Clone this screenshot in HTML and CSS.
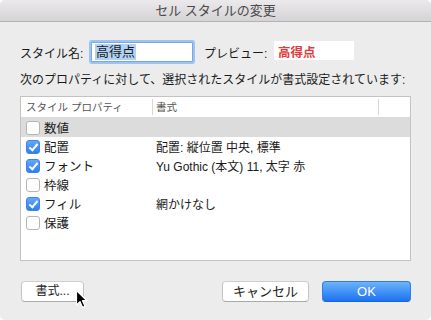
FILE: index.html
```html
<!DOCTYPE html>
<html lang="ja">
<head>
    <meta charset="UTF-8">
    <title>セル スタイルの変更</title>
    <link rel="stylesheet" href="styles.css">
</head>
<body>

    <div class="window">
        <div class="titlebar">セル スタイルの変更</div>

        <div class="content">
            <!-- style name + preview -->
            <div class="name-row">
                <label class="name-label" for="style-name">スタイル名:</label>
                <div class="name-input"><span class="selected">高得点</span></div>
                <span class="preview-label">プレビュー:</span>
                <div class="preview-box">高得点</div>
            </div>

            <p class="desc">次のプロパティに対して、選択されたスタイルが書式設定されています:</p>

            <!-- property list -->
            <div class="props">
                <div class="props-head">
                    <div class="col-name">スタイル プロパティ</div>
                    <div class="col-format">書式</div>
                    <div class="col-rest"></div>
                </div>
                <div class="prop-row highlight">
                    <div class="col-name"><span class="check"></span>数値</div>
                    <div class="col-format"></div>
                </div>
                <div class="prop-row">
                    <div class="col-name"><span class="check on"></span>配置</div>
                    <div class="col-format">配置: 縦位置 中央, 標準</div>
                </div>
                <div class="prop-row">
                    <div class="col-name"><span class="check on"></span>フォント</div>
                    <div class="col-format">Yu Gothic (本文) 11, 太字 赤</div>
                </div>
                <div class="prop-row">
                    <div class="col-name"><span class="check"></span>枠線</div>
                    <div class="col-format"></div>
                </div>
                <div class="prop-row">
                    <div class="col-name"><span class="check on"></span>フィル</div>
                    <div class="col-format">網かけなし</div>
                </div>
                <div class="prop-row">
                    <div class="col-name"><span class="check"></span>保護</div>
                    <div class="col-format"></div>
                </div>
            </div>

            <div class="buttons">
                <button class="btn btn-format">書式...</button>
                <div class="spacer"></div>
                <button class="btn btn-cancel">キャンセル</button>
                <button class="btn btn-ok">OK</button>
            </div>
        </div>

        <!-- mouse pointer over the 書式 button -->
        <svg class="pointer" width="14" height="20" viewBox="0 0 14 20">
            <path d="M1.5 1.5 L1.5 16 L5 12.6 L7.6 18.4 L10 17.3 L7.5 11.7 L12 11.7 Z" fill="#000" stroke="#fff" stroke-width="1.2" stroke-linejoin="round"/>
        </svg>
    </div>

</body>
</html>
```

FILE: styles.css
```css
body {
    margin: 0;
    background: #ffffff;
    font-family: "Liberation Sans", "Noto Sans CJK JP", sans-serif;
    color: #1a1a1a;
}
.window {
    position: relative;
    width: 431px;
    height: 320px;
    background: #ececec;
    border-radius: 5px;
    overflow: hidden;
}
.titlebar {
    height: 21px;
    line-height: 21px;
    text-align: center;
    font-size: 13px;
    color: #4a4a4a;
    background: linear-gradient(#ebe9eb, #d5d3d5);
    border-bottom: 1px solid #b3b3b3;
}
.content {
    padding: 20px 20px 0 20px;
}
.name-row {
    display: flex;
    align-items: center;
    height: 20px;
    font-size: 12px;
}
.name-label {
    width: 71px;
}
.name-input {
    width: 97px;
    height: 18px;
    background: #fff;
    border: 1px solid #78a9e4;
    box-shadow: 0 0 0 2px #9dc4f0;
    border-radius: 1px;
    display: flex;
    align-items: center;
    padding-left: 3px;
    font-size: 13px;
}
.selected {
    background: #b2d2f4;
    line-height: 16px;
    padding: 0 1px;
}
.preview-label {
    margin-left: 11px;
    width: 70px;
}
.preview-box {
    width: 76px;
    height: 19px;
    padding-left: 4px;
    margin-top: -3px;
    background: #fff;
    color: #e23b3b;
    font-weight: bold;
    font-size: 12.5px;
    line-height: 24px;
}
.desc {
    margin: 10px 0 0 0;
    font-size: 12px;
    line-height: 17px;
}
.props {
    margin-top: 7px;
    height: 163px;
    background: #fff;
    border: 1px solid #c3c3c3;
}
.props-head {
    display: flex;
    height: 20px;
    border-bottom: 1px solid #dadada;
    font-size: 10.5px;
    color: #555;
    align-items: center;
}
.props-head .col-format {
    border-left: 1px solid #d8d8d8;
    height: 16px;
    line-height: 16px;
}
.props-head .col-rest {
    flex: 1;
    border-left: 1px solid #d8d8d8;
    height: 16px;
}
.props-head .col-name {
    line-height: 16px;
}
.col-name {
    width: 126px;
    padding-left: 5px;
    display: flex;
    align-items: center;
}
.col-format {
    width: 222px;
    padding-left: 3px;
}
.prop-row {
    display: flex;
    align-items: center;
    height: 19px;
    font-size: 12.5px;
}
.prop-row .col-format {
    padding-left: 4px;
    font-size: 12px;
}
.prop-row.highlight {
    background: #dcdcdc;
}
.check {
    width: 12px;
    height: 12px;
    margin-right: 4px;
    border: 1px solid #b5b5b5;
    border-radius: 3px;
    background: #fff;
    position: relative;
}
.check.on {
    border-color: #3a86ee;
    background: linear-gradient(#64a8f8, #2f7fee);
}
.check.on::after {
    content: "";
    position: absolute;
    left: 4px;
    top: 1px;
    width: 3px;
    height: 7px;
    border: solid #fff;
    border-width: 0 2px 2px 0;
    transform: rotate(40deg);
}
.buttons {
    display: flex;
    align-items: center;
    margin-top: 20px;
}
.spacer {
    flex: 1;
}
.btn {
    height: 21px;
    font-family: inherit;
    font-size: 13px;
    border-radius: 4px;
    border: 1px solid #c4c4c4;
    border-top-color: #cfcfcf;
    border-bottom-color: #a9a9a9;
    background: #fff;
    color: #222;
    padding: 0;
    line-height: 19px;
}
.btn-format {
    width: 63px;
    margin-left: 1px;
    font-size: 12px;
}
.btn-cancel {
    width: 87px;
    margin-right: 13px;
}
.btn-ok {
    width: 89px;
    color: #fff;
    border-color: #2e7de8;
    border-bottom-color: #1b62d6;
    background: linear-gradient(#6cb3fa, #1c72f1);
}
.pointer {
    position: absolute;
    left: 75px;
    top: 289px;
}
```
